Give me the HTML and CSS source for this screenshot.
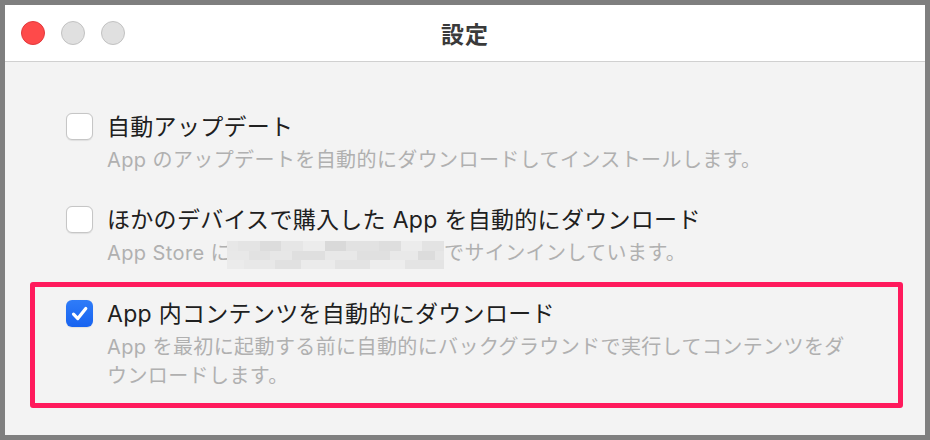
FILE: index.html
```html
<!DOCTYPE html>
<html>

<head>
  <meta charset="utf-8">
  <meta name="viewport" content="width=device-width, initial-scale=1.0">
  <title>設定</title>
  <link rel="stylesheet" href="styles.css">
</head>

<body>
  <div class="window">
    <div class="titlebar">
      <div class="lights">
        <span class="light close"></span>
        <span class="light"></span>
        <span class="light"></span>
      </div>
      <h1 class="title">設定</h1>
      <div></div>
    </div>

    <div class="content">
      <div class="row">
        <span class="check"></span>
        <div class="text">
          <div class="label">自動アップデート</div>
          <div class="desc">App のアップデートを自動的にダウンロードしてインストールします。</div>
        </div>
      </div>

      <div class="row">
        <span class="check"></span>
        <div class="text">
          <div class="label">ほかのデバイスで購入した App を自動的にダウンロード</div>
          <div class="desc">App Store に<span class="blur"></span>でサインインしています。</div>
        </div>
      </div>

      <div class="highlight">
        <div class="row">
          <span class="check on">
            <svg width="27" height="27" viewBox="0 0 27 27">
              <path d="M7.5 14.2 L11.8 18.6 L19.8 8.4" fill="none" stroke="#fff" stroke-width="3.2"
                stroke-linecap="round" stroke-linejoin="round" />
            </svg>
          </span>
          <div class="text">
            <div class="label">App 内コンテンツを自動的にダウンロード</div>
            <div class="desc">App を最初に起動する前に自動的にバックグラウンドで実行してコンテンツをダウンロードします。</div>
          </div>
        </div>
      </div>
    </div>
  </div>
</body>

</html>
```

FILE: styles.css
```css
html,
body {
  margin: 0;
  padding: 0;
}

body {
  background-color: #7f7f7f;
  font-family: "Inter", "Noto Sans CJK JP", sans-serif;
}

.window {
  margin: 5px;
  height: 430px;
  background-color: #f3f3f3;
  display: flex;
  flex-direction: column;
}

.titlebar {
  height: 56px;
  background-color: #fff;
  border-bottom: 1px solid #d0d0d0;
  display: grid;
  grid-template-columns: 1fr auto 1fr;
  align-items: center;
}

.lights {
  display: flex;
  gap: 16px;
  padding-left: 16px;
}

.light {
  width: 22px;
  height: 22px;
  border-radius: 50%;
  background-color: #e0e0e0;
  border: 1px solid #c2c2c2;
}

.light.close {
  background-color: #fe4a4a;
  border-color: #e2383c;
}

.title {
  margin: 0;
  font-family: "Noto Sans CJK JP", sans-serif;
  font-size: 23px;
  font-weight: bold;
  color: #3a3a3a;
  letter-spacing: 1px;
}

.content {
  padding: 50px 22px 0 25px;
}

.row {
  display: flex;
  gap: 14px;
  padding-left: 36px;
}

.row + .row {
  margin-top: 30px;
}

.check {
  flex: none;
  width: 25px;
  height: 25px;
  margin-top: 1px;
  border: 1px solid #c6c6c6;
  border-radius: 6px;
  background-color: #fff;
  box-shadow: 0 0.5px 1px rgba(0, 0, 0, 0.08);
}

.check.on {
  width: 27px;
  height: 27px;
  border: none;
  background: linear-gradient(#2f7cf8, #1763f0);
}

.check svg {
  display: block;
}

.label {
  font-size: 23px;
  line-height: 30px;
  color: #202020;
  letter-spacing: 0.3px;
}

.desc {
  margin-top: 4px;
  max-width: 757px;
  font-size: 20px;
  line-height: 29px;
  color: #b0b0b0;
  letter-spacing: 0.4px;
  line-break: anywhere;
}

.blur {
  display: inline-block;
  width: 217px;
  height: 28px;
  margin-left: -4px;
  vertical-align: middle;
  background-color: #e9e9e9;
  background-image:
    linear-gradient(90deg, #e7e7e7 0 5%, #e4e4e4 5% 15%, #dcdcdc 15% 25%, #e6e6e6 25% 35%, #ececec 35% 45%, #d9d9d9 45% 55%, #e2e2e2 55% 70%, #dedede 70% 80%, #ececec 80% 90%, #e3e3e3 90% 100%),
    linear-gradient(90deg, #e8e8e8 0 10%, #e2e2e2 10% 20%, #e7e7e7 20% 30%, #dfdfdf 30% 45%, #e8e8e8 45% 60%, #e0e0e0 60% 75%, #e9e9e9 75% 88%, #dcdcdc 88% 96%, #e6e6e6 96% 100%),
    linear-gradient(90deg, #ebebeb 0 8%, #e8e8e8 8% 22%, #e1e1e1 22% 34%, #ebebeb 34% 50%, #e3e3e3 50% 66%, #ededed 66% 82%, #e4e4e4 82% 100%);
  background-size: 100% 10px, 100% 9px, 100% 9px;
  background-position: 0 0, 0 10px, 0 19px;
  background-repeat: no-repeat;
}

.highlight {
  margin-top: 13px;
  border: 5px solid #ff1a5c;
  border-radius: 3px;
  padding: 12px 0 12px 31px;
}

.highlight .row {
  padding-left: 0;
}
```
